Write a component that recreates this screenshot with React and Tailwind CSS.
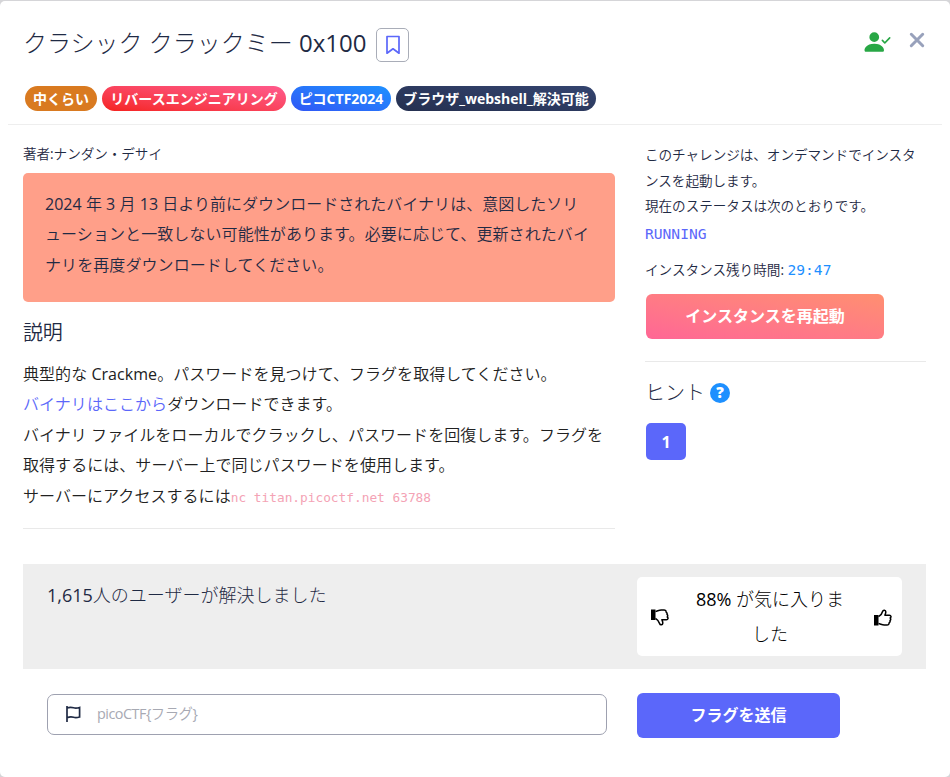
import React from "react";
import { BsPersonCheckFill } from "react-icons/bs";

function Badge({ className, children }) {
  return (
    <span className={`flex h-[25px] items-center justify-center rounded-full pt-px font-['Open_Sans','Noto_Sans_CJK_JP',sans-serif] text-sm font-bold whitespace-nowrap text-white ${className}`}>
      {children}
    </span>
  );
}

function Thumb({ className }) {
  return (
    <svg className={className} width="18" height="17" viewBox="0 0 18 17" fill="none">
      <path d="M0 6h4.500v10.500H0z" fill="currentColor" />
      <path d="M4.500 7.700C6.800 6.300 8.200 4.200 8.700 2.200C9.100.7 11.700.7 11.800 2.900C11.900 4.100 11.300 5.200 10.900 6.200H15.400C17.200 6.200 17.500 8.300 16.200 9C17 10 16.800 11 16 11.600C16.400 12.700 15.900 13.400 15.100 13.900C15.200 15.200 14.300 16 13 16H10.200C8 16 6.300 14.800 4.500 14.600" stroke="currentColor" strokeWidth="1.500" strokeLinejoin="round" />
    </svg>
  );
}

function Header() {
  return (
    <header className="mx-2 h-[124px] border-b border-[#eeeeee] pl-[15px]">
      <div className="flex h-[85px] items-start">
        <h1 className="mt-[24px] font-['Open_Sans','Noto_Sans_CJK_JP_Light','Noto_Sans_CJK_JP',sans-serif] text-2xl leading-9 font-normal whitespace-pre">クラシック クラックミー 0x100</h1>
        <button className="mt-[27px] ml-[10px] flex h-[34px] w-[33px] items-center justify-center rounded-[5px] border border-[#a9adb8]">
          <svg width="16" height="20" viewBox="0 0 16 20" fill="none" stroke="#5b67fa" strokeWidth="1.7" strokeLinejoin="round">
            <path d="M2 1.5h12v16.7l-6-4.400-6 4.400z" />
          </svg>
        </button>
        <BsPersonCheckFill className="mt-[28px] mr-[18px] ml-auto h-[26px] w-[27px] text-[#28a745]" />
        <svg className="mt-[31px] mr-[17px]" width="16" height="16" viewBox="0 0 16 16" stroke="#98a1bb" strokeWidth="3" strokeLinecap="round">
          <path d="M2.300 2.300l11.400 11.400M13.700 2.300L2.300 13.700" />
        </svg>
      </div>
      <div className="ml-[2px] flex gap-[5px]">
        <Badge className="w-[72px] bg-[#d97a20]">中くらい</Badge>
        <Badge className="w-[184px] bg-linear-to-tr from-[#f5211b] to-[#ff5a8c]">リバースエンジニアリング</Badge>
        <Badge className="w-[100px] bg-linear-to-tr from-[#3056f5] to-[#1e90ff]">ピコCTF2024</Badge>
        <Badge className="w-[200px] bg-linear-to-tr from-[#253050] to-[#34446f]">ブラウザ_webshell_解決可能</Badge>
      </div>
    </header>
  );
}

function Description() {
  return (
    <section className="w-[592px]">
      <p className="mt-[17px] text-[13.6px] leading-[26px] tracking-[-0.05px]">著者:ナンダン・デサイ</p>
      <div className="mt-[6px] h-[129px] rounded-[5px] bg-[#ff9f89] pt-[16px] pl-[22px] text-base leading-[30.4px] whitespace-nowrap">
        <p className="tracking-[0.03px]">2024 年 3 月 13 日より前にダウンロードされたバイナリは、意図したソリ</p>
        <p className="tracking-[0.08px]">ューションと一致しない可能性があります。必要に応じて、更新されたバイ</p>
        <p className="tracking-[0.08px]">ナリを再度ダウンロードしてください。</p>
      </div>
      <h2 className="mt-[16px] text-[20px] leading-[30px] tracking-[-0.3px]">説明</h2>
      <div className="mt-[11px] text-base leading-[30.4px] tracking-[0.05px] whitespace-nowrap text-[#212121]">
        <p>典型的な Crackme。パスワードを見つけて、フラグを取得してください。</p>
        <p><a className="text-[#5b67fa]">バイナリはここから</a>ダウンロードできます。</p>
        <p>バイナリ ファイルをローカルでクラックし、パスワードを回復します。フラグを</p>
        <p>取得するには、サーバー上で同じパスワードを使用します。</p>
        <p>サーバーにアクセスするには<code className="font-['DejaVu_Sans_Mono',monospace] text-[12.8px] leading-none tracking-normal text-[#f4a3b5]">nc titan.picoctf.net 63788</code></p>
      </div>
      <div className="mt-[17px] h-px bg-[#e9e9e9]" />
    </section>
  );
}

function Sidebar() {
  return (
    <aside className="ml-[30px] w-[281px]">
      <div className="mt-[18px] text-[13.6px] leading-[25.5px] tracking-[-0.04px] whitespace-nowrap">
        <p>このチャレンジは、オンデマンドでインスタ</p>
        <p>ンスを起動します。</p>
        <p>現在のステータスは次のとおりです。</p>
      </div>
      <p className="mt-[2px] font-['DejaVu_Sans_Mono',monospace] text-[14.6px] leading-[26px] text-[#5b67fa]">RUNNING</p>
      <p className="mt-[10px] flex text-[13.6px] leading-[26px] whitespace-pre">インスタンス残り時間: <span className="font-['DejaVu_Sans_Mono',monospace] text-[14.6px] text-[#1e90ff]">29:47</span></p>
      <button className="mt-[11px] ml-px flex h-[45px] w-[238px] items-center justify-center rounded-[6px] bg-linear-to-tr from-[#ff6695] to-[#ff8f70] font-['Open_Sans','Noto_Sans_CJK_JP',sans-serif] text-base font-bold text-white">インスタンスを再起動</button>
      <div className="mt-[22px] h-px bg-[#e9e9e9]" />
      <h2 className="mt-[16px] flex h-[30px] items-center font-['Open_Sans','Noto_Sans_CJK_JP_Light','Noto_Sans_CJK_JP',sans-serif] text-[20px] leading-[30px]">
        ヒント
        <span className="ml-[5px] flex size-5 items-center justify-center rounded-full bg-[#1e90ff] text-[15px] leading-none font-extrabold text-white">?</span>
      </h2>
      <button className="mt-[15px] ml-px flex h-[37px] w-10 items-center justify-center rounded-[5px] bg-[#5b67fa] pt-[2px] text-base font-bold text-white">1</button>
    </aside>
  );
}

function Footer() {
  return (
    <footer>
      <div className="ml-[23px] flex h-[105px] w-[903px] bg-[#eeeeee] pl-6 font-['Open_Sans','Noto_Sans_CJK_JP_Light','Noto_Sans_CJK_JP',sans-serif] text-[18px] leading-[34.2px]">
        <p className="mt-[14px] w-[590px]">1,615人のユーザーが解決しました</p>
        <div className="mt-[13px] flex h-[79px] w-[265px] items-center rounded-[5px] bg-white pr-[10px] pl-[14px] text-black">
          <Thumb className="mt-px -scale-y-100" />
          <p className="flex-1 pr-[3px] text-center">88% が気に入りま<br />した</p>
          <Thumb className="mt-[2px]" />
        </div>
      </div>
      <div className="mt-[24px] ml-[47px] flex">
        <div className="mt-px mr-[30px] flex h-[41px] w-[560px] items-center rounded-[7px] border border-[#9ea1b0] pl-[17px]">
          <svg className="mb-px" width="16" height="18" viewBox="0 0 16 18" fill="none" stroke="#1f2a44" strokeWidth="1.7">
            <path d="M2 1v16M2 3c3-1.200 4.800-.8 6.600-.2C10.400 3.400 12 3.300 14.600 2.500V12c-2.600.8-4.200.9-6 .3C6.800 11.700 5 11.500 2 12.700" />
          </svg>
          <span className="ml-[16px] pb-[2px] text-[14.4px] tracking-[-0.5px] text-[#a7a9b3]">picoCTF&#123;フラグ&#125;</span>
        </div>
        <button className="flex h-[45px] w-[203px] items-center justify-center rounded-[6px] bg-[#5b67fa] pb-[2px] font-['Open_Sans','Noto_Sans_CJK_JP',sans-serif] text-base font-bold text-white">フラグを送信</button>
      </div>
    </footer>
  );
}

export default function App() {
  return (
    <div className="h-[777px] w-[950px] overflow-hidden bg-[#d5d5d8] pt-px font-['Open_Sans','Noto_Sans_CJK_JP_DemiLight','Noto_Sans_CJK_JP_Light','Noto_Sans_CJK_JP',sans-serif] font-normal text-[#1f2a44]">
      <div className="h-[776px] rounded-[5px] bg-white">
        <Header />
        <main className="-mt-px flex h-[440px] pl-[23px]">
          <Description />
          <Sidebar />
        </main>
        <Footer />
      </div>
    </div>
  );
}
